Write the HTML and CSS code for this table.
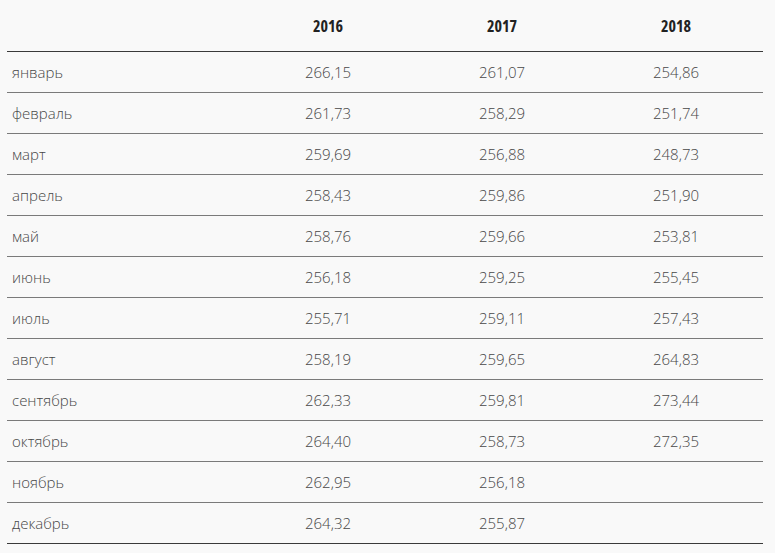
FILE: index.html
```html
<!DOCTYPE html>
<html lang="ru">
<head>
<meta charset="utf-8">
<link rel="stylesheet" href="styles.css">
</head>
<body>
<table class="prices">
  <thead>
    <tr><th class="month"></th><th>2016</th><th>2017</th><th>2018</th></tr>
  </thead>
  <tbody>
    <tr><td class="month">январь</td><td>266,15</td><td>261,07</td><td>254,86</td></tr>
    <tr><td class="month">февраль</td><td>261,73</td><td>258,29</td><td>251,74</td></tr>
    <tr><td class="month">март</td><td>259,69</td><td>256,88</td><td>248,73</td></tr>
    <tr><td class="month">апрель</td><td>258,43</td><td>259,86</td><td>251,90</td></tr>
    <tr><td class="month">май</td><td>258,76</td><td>259,66</td><td>253,81</td></tr>
    <tr><td class="month">июнь</td><td>256,18</td><td>259,25</td><td>255,45</td></tr>
    <tr><td class="month">июль</td><td>255,71</td><td>259,11</td><td>257,43</td></tr>
    <tr><td class="month">август</td><td>258,19</td><td>259,65</td><td>264,83</td></tr>
    <tr><td class="month">сентябрь</td><td>262,33</td><td>259,81</td><td>273,44</td></tr>
    <tr><td class="month">октябрь</td><td>264,40</td><td>258,73</td><td>272,35</td></tr>
    <tr><td class="month">ноябрь</td><td>262,95</td><td>256,18</td><td></td></tr>
    <tr><td class="month">декабрь</td><td>264,32</td><td>255,87</td><td></td></tr>
  </tbody>
</table>
</body>
</html>
```

FILE: styles.css
```css
html, body {
  margin: 0;
  padding: 0;
  background: #f9f9f9;
}
body {
  padding: 0 12px 0 7px;
  font-family: "Open Sans", "DejaVu Sans", sans-serif;
}
.prices {
  width: 756px;
  border-collapse: collapse;
  table-layout: fixed;
  color: #474747;
}
.prices th, .prices td {
  padding: 0;
  text-align: center;
  vertical-align: middle;
}
.prices th {
  height: 51px;
  font-family: "Open Sans", "Liberation Sans Narrow", sans-serif;
  font-stretch: 75%;
  font-weight: 700;
  font-size: 16px;
  color: #222;
  width: 174px;
  border-bottom: 1px solid #3a3a3a;
  box-sizing: border-box;
  padding-top: 1px;
}
.prices th.month {
  width: 234px;
}
.prices td {
  height: 41px;
  box-sizing: border-box;
  font-size: 15px;
  font-weight: 300;
  border-bottom: 1px solid #7a7a7a;
  padding-top: 0;
}
.prices td.month {
  text-align: left;
  padding-left: 5px;
}
.prices tbody tr:last-child td {
  border-bottom-color: #3a3a3a;
}
```
